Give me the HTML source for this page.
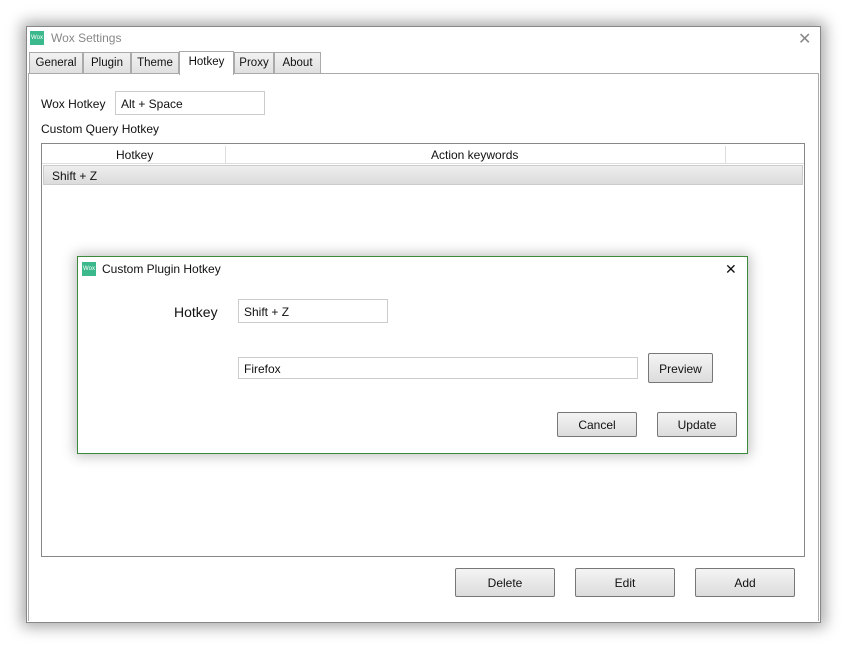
<!DOCTYPE html><html><head><style>
body{margin:0;width:846px;height:648px;background:#fff;position:relative;overflow:hidden;font-family:"Liberation Sans",sans-serif;font-size:12px;color:#111}
.a{position:absolute;box-sizing:border-box}
.win{left:26px;top:26px;width:795px;height:597px;background:#fff;border:1px solid #888;box-shadow:0 0 14px 4px rgba(0,0,0,.35)}
.tab{top:52px;height:22px;border:1px solid #aaa;background:linear-gradient(#f2f2f2,#e0e0e0);padding:4px 0 0;text-align:center;font-size:12px}
.btn{border:1px solid #777;border-radius:2px;background:linear-gradient(#f4f4f4,#dcdcdc);text-align:center;font-size:12px}
.inp{border:1px solid #ccc;background:#fff;padding-left:5px;font-size:12px}
.logo{width:14px;height:14px;background:#3bb98c;color:#fff;font-size:6px;line-height:14px;text-align:center}
</style></head><body>
<div class="a win"></div>
<div class="a logo" style="left:30px;top:31px">Wox</div>
<div class="a" style="left:51px;top:31px;font-size:12px;color:#888">Wox Settings</div>
<div class="a" style="left:798px;top:29px;font-size:16px;color:#888;font-weight:100">✕</div>
<div class="a" style="left:28px;top:73px;width:791px;height:548px;border-top:1px solid #aaa;border-left:1px solid #aaa;border-right:1px solid #aaa"></div>
<div class="a tab" style="left:29px;width:54px;font-size:11.5px">General</div>
<div class="a tab" style="left:83px;width:48px;font-size:11.5px">Plugin</div>
<div class="a tab" style="left:131px;width:48px;font-size:11.5px">Theme</div>
<div class="a tab" style="left:179px;top:51px;height:24px;width:55px;background:#fff;border-bottom:none;font-size:11.5px">Hotkey</div>
<div class="a tab" style="left:234px;width:40px;font-size:11.5px">Proxy</div>
<div class="a tab" style="left:274px;width:47px;font-size:11.5px">About</div>
<div class="a" style="left:41px;top:97px">Wox Hotkey</div>
<div class="a inp" style="left:115px;top:91px;width:150px;height:24px;padding-top:5px">Alt + Space</div>
<div class="a" style="left:41px;top:122px">Custom Query Hotkey</div>
<div class="a" style="left:41px;top:143px;width:764px;height:414px;border:1px solid #888"></div>
<div class="a" style="left:42px;top:144px;width:762px;height:20px;border-bottom:1px solid #ddd"></div>
<div class="a" style="left:116px;top:148px">Hotkey</div>
<div class="a" style="left:225px;top:146px;width:1px;height:17px;background:#ddd"></div>
<div class="a" style="left:431px;top:148px">Action keywords</div>
<div class="a" style="left:725px;top:146px;width:1px;height:17px;background:#ddd"></div>
<div class="a" style="left:43px;top:165px;width:760px;height:20px;background:linear-gradient(#eee,#dcdcdc);border:1px solid #ccc;padding:3px 0 0 8px">Shift + Z</div>
<div class="a btn" style="left:455px;top:568px;width:100px;height:29px;padding-top:7px">Delete</div>
<div class="a btn" style="left:575px;top:568px;width:100px;height:29px;padding-top:7px">Edit</div>
<div class="a btn" style="left:695px;top:568px;width:100px;height:29px;padding-top:7px">Add</div>
<div class="a" style="left:77px;top:256px;width:671px;height:198px;background:#fff;border:1px solid #3b8a3b;box-shadow:0 0 12px 2px rgba(0,0,0,.25)"></div>
<div class="a logo" style="left:82px;top:262px">Wox</div>
<div class="a" style="left:102px;top:262px">Custom Plugin Hotkey</div>
<div class="a" style="left:725px;top:261px;font-size:14px">✕</div>
<div class="a" style="left:174px;top:304px;font-size:14px">Hotkey</div>
<div class="a inp" style="left:238px;top:299px;width:150px;height:24px;padding-top:5px">Shift + Z</div>
<div class="a inp" style="left:238px;top:357px;width:400px;height:22px;padding-top:4px">Firefox</div>
<div class="a btn" style="left:648px;top:353px;width:65px;height:30px;padding-top:8px">Preview</div>
<div class="a btn" style="left:557px;top:412px;width:80px;height:25px;padding-top:5px">Cancel</div>
<div class="a btn" style="left:657px;top:412px;width:80px;height:25px;padding-top:5px">Update</div>
</body></html>
